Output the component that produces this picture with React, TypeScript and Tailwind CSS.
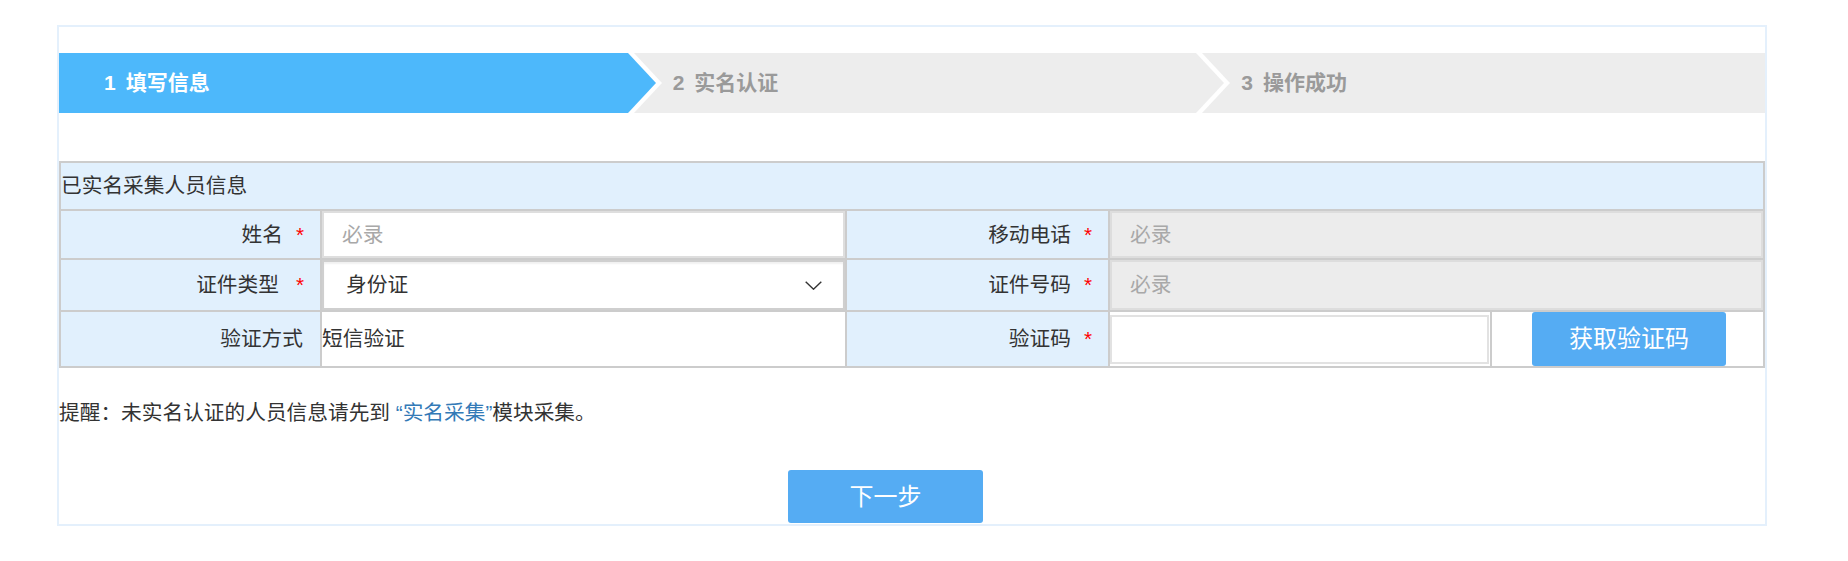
import React from 'react';

const steps = [
  { no: '1', title: '填写信息' },
  { no: '2', title: '实名认证' },
  { no: '3', title: '操作成功' },
];

const Label = ({ text, star, gap = 13 }: { text: string; star?: boolean; gap?: number }) => (
  <div className="flex items-center justify-end bg-[#e1f0fd] pr-[16px] text-[#333]">
    <span>{text}</span>
    {star ? (
      <span className={`${gap === 17 ? 'ml-[17px]' : 'ml-[13px]'} text-[#ff0000]`}>*</span>
    ) : (
      <span className="w-[1px]" />
    )}
  </div>
);

const ChevronDown = () => (
  <svg width="17" height="9" viewBox="0 0 17 9" fill="none">
    <polyline points="0.7,0.7 8.5,8.2 16.3,0.7" stroke="#333" strokeWidth="1.4" />
  </svg>
);

export default function App() {
  return (
    <div className="min-h-screen bg-white pt-[25px] font-['Liberation_Sans','Noto_Sans_CJK_SC',sans-serif] text-[20.7px]">
      <div className="ml-[57px] w-[1710px] border-2 border-[#e4f0fc] pt-[26px] pb-[1px]">
        {/* steps */}
        <div className="flex h-[60px]">
          {steps.map((s, i) => (
            <div
              key={s.no}
              className={`relative flex flex-1 items-center pl-[45px] text-[21px] font-bold ${
                i === 0 ? 'bg-[#4db8fb] text-white' : 'bg-[#ededed] text-[#9a9a9a]'
              }`}
            >
              <span>{s.no}</span>
              <span className="ml-[10px]">{s.title}</span>
              {i < steps.length - 1 && (
                <svg
                  className="absolute left-full top-0 z-10"
                  width="34"
                  height="60"
                  viewBox="0 0 34 60"
                >
                  <polygon points="0,0 6,0 34,30 6,60 0,60" fill="#ffffff" />
                  <polygon points="0,0 28,30 0,60" fill={i === 0 ? '#4db8fb' : '#ededed'} />
                </svg>
              )}
            </div>
          ))}
        </div>

        {/* form table */}
        <div className="mt-[48px] grid grid-cols-[259px_523px_261px_653px] gap-[2px] bg-[#cccccc] p-[2px] leading-[30px]">
          <div className="col-span-4 flex h-[46px] items-center bg-[#e1f0fd] text-[#333]">
            已实名采集人员信息
          </div>

          <div className="contents">
            <Label text="姓名" star />
            <div className="h-[47px] bg-white">
              <input
                readOnly
                placeholder="必录"
                className="h-full w-full border-2 border-[#dedede] bg-white pl-[18px] text-[#333] outline-none placeholder:text-[#a8a8a8]"
              />
            </div>
            <Label text="移动电话" star gap={12} />
            <div className="h-[47px] bg-white">
              <input
                readOnly
                placeholder="必录"
                className="h-full w-full border-2 border-[#dddddd] bg-[#ececec] pl-[18px] outline-none placeholder:text-[#a8a8a8]"
              />
            </div>
          </div>

          <div className="contents">
            <Label text="证件类型" star gap={17} />
            <div className="h-[50px] bg-white">
              <div className="flex h-full items-center justify-between border-2 border-[#cfcfcf] bg-white pr-[21px] pl-[22px] text-[#333] shadow-[inset_0_2px_2px_rgba(0,0,0,0.06)]">
                <span>身份证</span>
                <ChevronDown />
              </div>
            </div>
            <Label text="证件号码" star gap={12} />
            <div className="h-[50px] bg-white">
              <input
                readOnly
                placeholder="必录"
                className="h-full w-full border-2 border-[#dddddd] bg-[#ececec] pl-[18px] outline-none placeholder:text-[#a8a8a8]"
              />
            </div>
          </div>

          <div className="contents">
            <Label text="验证方式" />
            <div className="flex h-[54px] items-center bg-white text-[#333]">短信验证</div>
            <Label text="验证码" star gap={12} />
            <div className="grid h-[54px] grid-cols-[380px_271px] gap-[2px] bg-[#cccccc]">
              <div className="bg-white pt-[3px] pr-[1px] pb-[2px]">
                <input
                  readOnly
                  className="h-full w-full border-2 border-[#e2e2e2] bg-white outline-none"
                />
              </div>
              <div className="flex justify-center bg-white pl-[3px]">
                <button className="h-full w-[194px] rounded-[3px] bg-[#55acf3] text-[24px] text-white">
                  获取验证码
                </button>
              </div>
            </div>
          </div>
        </div>

        {/* tip */}
        <p className="mt-[30px] leading-[30px] text-[#333]">
          提醒：未实名认证的人员信息请先到 <a className="text-[#337ab7]">“实名采集”</a>模块采集。
        </p>

        <div className="mt-[42px] flex">
          <button className="ml-[729px] h-[53px] w-[195px] rounded-[3px] bg-[#55acf3] text-[24px] text-white">
            下一步
          </button>
        </div>
      </div>
    </div>
  );
}
